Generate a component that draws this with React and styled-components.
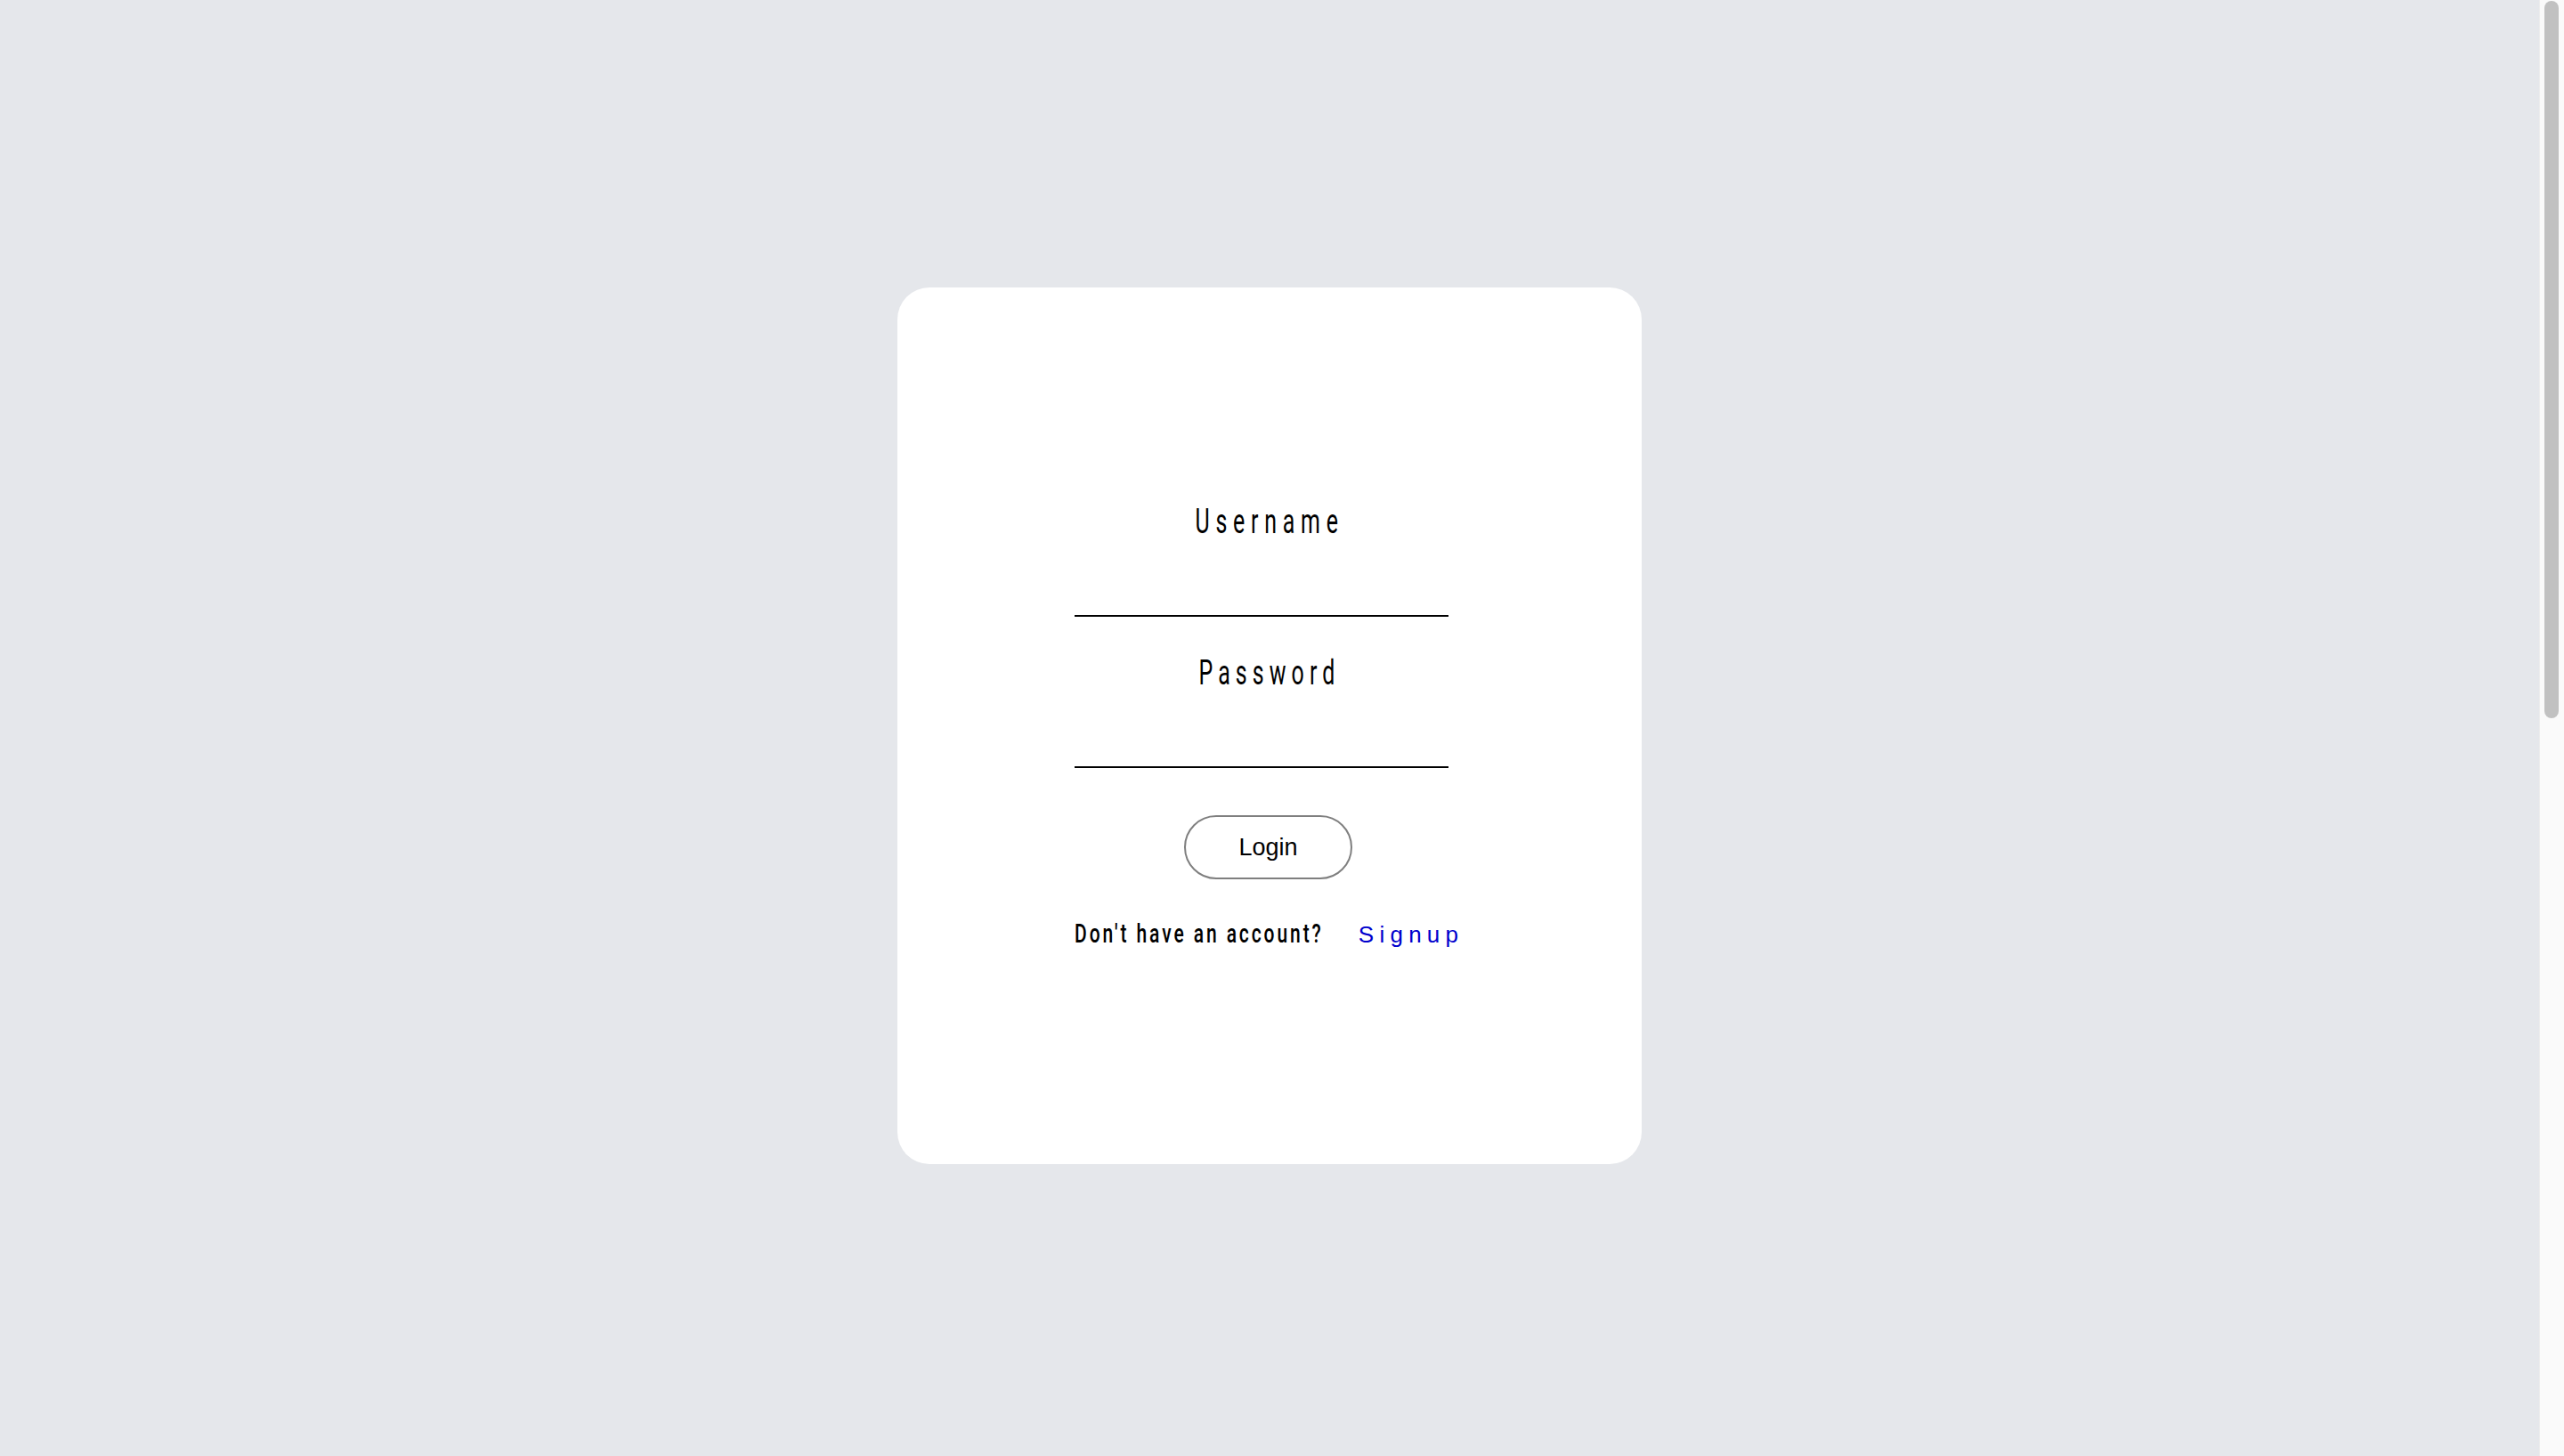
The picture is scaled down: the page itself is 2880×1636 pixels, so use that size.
import styled, { createGlobalStyle } from "styled-components";

const GlobalStyle = createGlobalStyle`
  html {
    scrollbar-width: none;
  }
  body {
    margin: 0;
    background: #e5e7eb;
    font-family: Roboto, "Liberation Sans", sans-serif;
  }
`;

// the window's scroll rail, drawn since the page photo keeps it
const ScrollRail = styled.div`
  position: fixed;
  top: 0;
  right: 0;
  width: 28px;
  height: 100vh;
  box-sizing: border-box;
  background: #fafafa;
  border-left: 1px solid #ededed;
  padding: 1px 6px 0 5px;
`;

const ScrollThumb = styled.div`
  height: 806px;
  border-radius: 8px;
  background: #c1c1c1;
`;

const Page = styled.div`
  min-height: 3370px;
  padding: 323px 28px 0 0;
  box-sizing: border-box;
`;

const Card = styled.div`
  width: 836px;
  height: 985px;
  margin: 0 auto;
  padding: 241px 0 0 199px;
  box-sizing: border-box;
  background: #ffffff;
  border-radius: 36px;
`;

const Form = styled.form`
  width: 431px;
  display: flex;
  flex-direction: column;
`;

const Label = styled.label`
  display: block;
  text-align: center;
  font-size: 39px;
  font-weight: 400;
  line-height: 44px;
  color: #000;
`;

// narrow, tall lettering of the original face
const Narrow = styled.span`
  display: inline-block;
  white-space: nowrap;
  letter-spacing: ${(p) => p.$spacing}px;
  padding-left: ${(p) => (p.$center ? p.$spacing : 0)}px;
  transform: scaleX(${(p) => p.$scale});
  transform-origin: ${(p) => (p.$center ? "center" : "left")};
`;

const Input = styled.input`
  display: block;
  width: 420px;
  height: 85px;
  margin: 0 0 ${(p) => (p.$last ? "53px" : "41px")};
  padding: 0;
  box-sizing: border-box;
  border: none;
  border-bottom: 2px solid #000;
  background: transparent;
  outline: none;
  font-size: 28px;
`;

const Button = styled.button`
  align-self: center;
  width: 189px;
  height: 72px;
  margin-left: 4px;
  border: 2px solid #7f7f7f;
  border-radius: 36px;
  background: #ffffff;
  color: #000;
  font-family: "Liberation Sans", Arial, sans-serif;
  font-size: 27px;
  cursor: pointer;
`;

const SignupRow = styled.div`
  margin-top: 44px;
  display: grid;
  grid-template-columns: minmax(0, 1fr) auto;
  align-items: baseline;
  font-size: 29px;
  font-weight: 500;
  line-height: 34px;
  color: #000;
`;

const SignupLink = styled.a`
  font-family: "Liberation Sans", Arial, sans-serif;
  font-size: 26px;
  font-weight: 400;
  letter-spacing: 0.24em;
  margin-right: -0.24em;
  color: #0000cd;
  text-decoration: none;
`;

export default function App() {
  return (
    <Page>
      <GlobalStyle />
      <Card>
        <Form onSubmit={(e) => e.preventDefault()}>
          <Label htmlFor="username">
            <Narrow $scale={0.64} $spacing={10.5} $center>
              Username
            </Narrow>
          </Label>
          <Input id="username" type="text" />
          <Label htmlFor="password">
            <Narrow $scale={0.64} $spacing={9.5} $center>
              Password
            </Narrow>
          </Label>
          <Input id="password" type="password" $last />
          <Button type="submit">Login</Button>
          <SignupRow>
            <div>
              <Narrow $scale={0.725} $spacing={4}>
                Don't have an account?
              </Narrow>
            </div>
            <SignupLink href="#signup">Signup</SignupLink>
          </SignupRow>
        </Form>
      </Card>
      <ScrollRail aria-hidden="true">
        <ScrollThumb />
      </ScrollRail>
    </Page>
  );
}
